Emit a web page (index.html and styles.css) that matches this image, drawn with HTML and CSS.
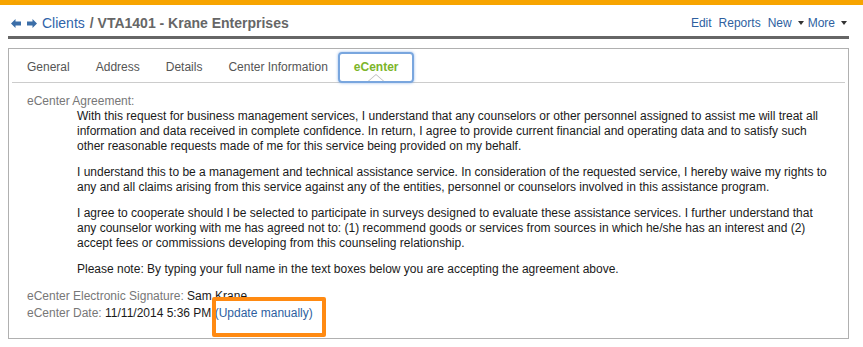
FILE: index.html
```html
<!DOCTYPE html>
<html lang="en">
<head>
  <meta charset="UTF-8">
  <title>Clients / VTA1401 - Krane Enterprises</title>
  <link rel="stylesheet" href="styles.css">
</head>
<body>

<div class="top-strip"></div>

<header class="page-head">
  <h1 class="title">
    <span class="nav-arrows">
      <svg width="10" height="9" viewBox="0 0 10 9"><path d="M0 4.5 L4.5 0 L4.5 2.5 L10 2.5 L10 6.5 L4.5 6.5 L4.5 9 Z" fill="#3b6ea8"/></svg>
      <svg width="10" height="9" viewBox="0 0 10 9"><path d="M10 4.5 L5.5 0 L5.5 2.5 L0 2.5 L0 6.5 L5.5 6.5 L5.5 9 Z" fill="#3b6ea8"/></svg>
    </span>
    <a class="crumb">Clients</a> / VTA1401 - Krane Enterprises
  </h1>
  <ul class="actions">
    <li>Edit</li>
    <li>Reports</li>
    <li class="drop">New</li>
    <li class="drop">More</li>
  </ul>
</header>

<section class="panel">
  <ul class="tabs">
    <li>General</li>
    <li>Address</li>
    <li>Details</li>
    <li>Center Information</li>
    <li class="active">eCenter</li>
  </ul>

  <div class="tab-body">
    <div class="label">eCenter Agreement:</div>
    <div class="agreement">
      <p>With this request for business management services, I understand that any counselors or other personnel assigned to assist me will treat all information and data received in complete confidence. In return, I agree to provide current financial and operating data and to satisfy such other reasonable requests made of me for this service being provided on my behalf.</p>
      <p>I understand this to be a management and technical assistance service. In consideration of the requested service, I hereby waive my rights to any and all claims arising from this service against any of the entities, personnel or counselors involved in this assistance program.</p>
      <p>I agree to cooperate should I be selected to participate in surveys designed to evaluate these assistance services. I further understand that any counselor working with me has agreed not to: (1) recommend goods or services from sources in which he/she has an interest and (2) accept fees or commissions developing from this counseling relationship.</p>
      <p>Please note: By typing your full name in the text boxes below you are accepting the agreement above.</p>
    </div>

    <div class="fields">
      <div><span class="label">eCenter Electronic Signature:</span> Sam Krane</div>
      <div><span class="label">eCenter Date:</span> 11/11/2014 5:36 PM <a class="link">(Update manually)</a></div>
      <span class="highlight"></span>
    </div>
  </div>
</section>

</body>
</html>
```

FILE: styles.css
```css
* { box-sizing: border-box; margin: 0; padding: 0; }
body { font-family: "Liberation Sans", Arial, sans-serif; font-size: 12px; color: #1a1a1a; background: #fff; }

.top-strip { height: 5px; background: #f7a400; }

/* Header */
.page-head {
  display: flex; justify-content: space-between; align-items: center;
  margin: 0 14px 0 8px; height: 34px; padding-top: 5px;
  border-bottom: 3px solid #666;
}
.title { font-size: 14px; font-weight: bold; color: #666; display: flex; align-items: center; gap: 5px; }
.nav-arrows { display: flex; gap: 6px; padding-left: 3px; }
.nav-arrows svg { display: block; }
.crumb { color: #2f63a9; font-weight: normal; }

.actions { list-style: none; display: flex; gap: 7px; color: #2e5f9f; padding-right: 2px; }
.actions li { cursor: pointer; }
.actions .drop::after {
  content: ""; display: inline-block; margin-left: 6px; vertical-align: 2px;
  border-left: 3.5px solid transparent; border-right: 3.5px solid transparent; border-top: 4px solid #333;
}
.actions .drop + .drop { margin-left: -3px; }

/* Panel */
.panel {
  margin: 9px 14px 0 8px; height: 291px;
  border: 1px solid #b0b0b0; position: relative;
}

.tabs {
  list-style: none; display: flex; margin: 0 3px; padding: 3px 0 0 2px;
  border-bottom: 1px solid #ccc;
}
.tabs li {
  padding: 0 11px; line-height: 26px; border: 2px solid transparent;
  color: #555; cursor: pointer;
}
.tabs li.active {
  position: relative; margin-left: -3px; padding: 0 13px 0 14px;
  border-color: #79a6de; border-radius: 4px; margin-bottom: -1px;
  box-shadow: 0 0 3px rgba(80, 140, 220, 0.6);
  color: #7cb52a; font-weight: bold;
}
.tabs li.active::before, .tabs li.active::after {
  content: ""; position: absolute; left: 50%; bottom: 0; transform: translateX(-50%);
  border-left: 8px solid transparent; border-right: 8px solid transparent;
}
.tabs li.active::before { border-bottom: 7px solid #bbb; }
.tabs li.active::after { border-left-width: 7px; border-right-width: 7px; border-bottom: 6px solid #fff; }

.tab-body { padding: 11px 0 0 18px; line-height: 15px; }
.label { color: #777; }
.agreement { padding: 0 18px 0 50px; }
.agreement p + p { margin-top: 11px; }

.fields { margin-top: 11px; line-height: 17px; position: relative; }
.link { color: #2e5f9f; cursor: pointer; }
.highlight {
  position: absolute; left: 185px; top: 9px; width: 114px; height: 40px;
  border: 4px solid #ff8a12; border-radius: 2px;
}
```
